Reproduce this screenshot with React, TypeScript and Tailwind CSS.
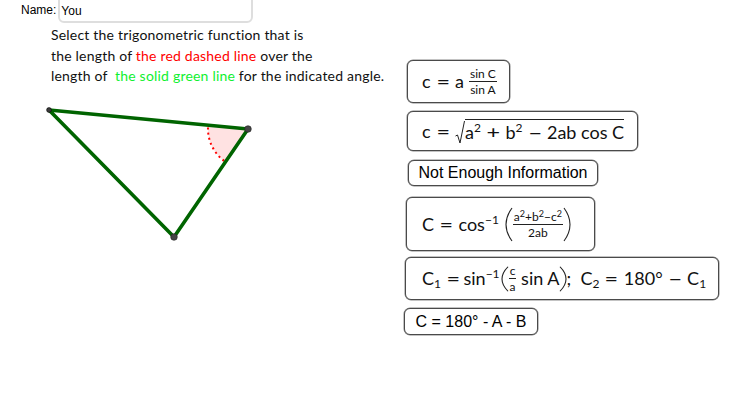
const mathFont = "font-['Lato',sans-serif] text-[#111]";
const btn = 'flex items-center rounded-[6px] border border-[#4a4a4a] bg-white shadow-[0_0_0_0.5px_#888]';

function Frac({ top, bottom, className = 'text-[12px]' }: { top: React.ReactNode; bottom: React.ReactNode; className?: string }) {
  return (
    <span className={`inline-flex flex-col items-center leading-[13px] ${className}`}>
      <span className="border-b border-[#222] px-[1px] pb-[1px]">{top}</span>
      <span className="px-[1px] pt-[1px]">{bottom}</span>
    </span>
  );
}

function Sup({ children, className = 'text-[12px] top-[-7px]' }: { children: React.ReactNode; className?: string }) {
  return <sup className={`align-baseline leading-none ${className}`}>{children}</sup>;
}

function Sub({ children }: { children: React.ReactNode }) {
  return <sub className="bottom-[-3px] align-baseline text-[12px] leading-none">{children}</sub>;
}

function Op({ children }: { children: React.ReactNode }) {
  return <span className="mx-[7px] inline-block scale-x-[1.3]">{children}</span>;
}

function Paren({ height, flip = false }: { height: number; flip?: boolean }) {
  return (
    <svg width="8" height={height} viewBox="0 0 8 36" preserveAspectRatio="none" className={flip ? '-scale-x-100' : ''}>
      <path d="M7 1 C2 8 1 13 1 18 C1 23 2 28 7 35" fill="none" stroke="#222" strokeWidth="1.1" />
    </svg>
  );
}

function Triangle() {
  return (
    <svg width="240" height="150" viewBox="30 95 240 150" className="ml-[30px] mt-[9px]">
      <path d="M248 128 L208 126 A40 40 0 0 0 224.3 160 Z" fill="#ffe2e2" />
      <path d="M208 126.5 A40 40 0 0 0 224.3 160" fill="none" stroke="#ff0000" strokeWidth="2" strokeDasharray="2 3.2" />
      <path d="M49 109 L248 128 L174 236 Z" fill="none" stroke="#006400" strokeWidth="3.6" strokeLinejoin="round" />
      <circle cx="49" cy="109" r="2.4" fill="#3c3c3c" stroke="#000" strokeWidth="0.6" />
      <circle cx="248" cy="128" r="3.3" fill="#444" stroke="#222" strokeWidth="0.6" />
      <circle cx="174" cy="236" r="3.3" fill="#444" stroke="#222" strokeWidth="0.6" />
    </svg>
  );
}

export default function App() {
  return (
    <div className="flex h-[408px] w-[736px] overflow-hidden bg-white">
      <div className="w-[404px] shrink-0">
        <div className="flex h-[24px] items-start pl-[21px] font-['Liberation_Sans',sans-serif] text-[12px] leading-[20px] text-black">
          <span className="mr-[2px]">Name:</span>
          <div className="mt-[-6px] h-[29px] w-[195px] rounded-[6px] border-2 border-[#dedede] pl-[1px] pt-[5px]">You</div>
        </div>
        <div className={`ml-[51px] mt-[1px] whitespace-pre text-[14px] leading-[20.5px] tracking-[0.2px] ${mathFont}`}>
          <p>Select the trigonometric function that is</p>
          <p>
            the length of <span className="text-[#ff0000]">the red dashed line</span> over the
          </p>
          <p>
            length of  <span className="text-[#10f030]">the solid green line</span> for the indicated angle.
          </p>
        </div>
        <Triangle />
      </div>

      <div className={`flex flex-col items-start whitespace-pre pt-[60px] text-[18px] ${mathFont}`}>
        <div className={`${btn} ml-[3px] h-[43px] w-[103px] pl-[14px]`}>
          <span>c<Op>=</Op>a</span>
          <Frac className="ml-[5px] text-[12px]" top="sin C" bottom="sin A" />
        </div>
        <div className={`${btn} ml-[3px] mt-[8px] h-[40px] w-[231px] pl-[14px]`}>
          <span>c<Op>=</Op></span>
          <svg width="10" height="25" viewBox="0 0 10 25" className="mt-[2px]">
            <path d="M0.5 16 L2.5 15 L5 23 L9.5 1" fill="none" stroke="#222" strokeWidth="1" />
          </svg>
          <span className="mt-[1px] border-t border-[#222] leading-[24px]">
            a<Sup>2</Sup><Op>+</Op>b<Sup>2</Sup><Op>−</Op>2ab cos C
          </span>
        </div>
        <div className={`${btn} ml-[4px] mt-[9px] h-[26px] w-[190px] justify-center font-['Liberation_Sans',sans-serif] text-[16px] text-black`}>
          Not Enough Information
        </div>
        <div className={`${btn} ml-[2px] mt-[11px] h-[54px] w-[189px] pl-[15px]`}>
          <span>C<Op>=</Op>cos<Sup>−1</Sup></span>
          <span className="ml-[6px]"><Paren height={35} /></span>
          <Frac
            className="text-[12px]"
            top={<>a<Sup className="top-[-4px] text-[9px]">2</Sup>+b<Sup className="top-[-4px] text-[9px]">2</Sup>−c<Sup className="top-[-4px] text-[9px]">2</Sup></>}
            bottom="2ab"
          />
          <Paren height={35} flip />
        </div>
        <div className={`${btn} ml-[1px] mt-[6px] h-[43px] w-[314px] pl-[16px]`}>
          <span>C<Sub>1</Sub><Op>=</Op><span className="-ml-[2px]">sin</span><Sup>−1</Sup></span>
          <span className="ml-[1px]"><Paren height={26} /></span>
          <Frac className="text-[12px]" top="c" bottom="a" />
          <span> sin A</span>
          <Paren height={26} flip />
          <span className="-ml-[1px]">;  C<Sub>2</Sub><Op>=</Op>180°<Op>−</Op>C<Sub>1</Sub></span>
        </div>
        <div className={`${btn} mt-[8px] h-[27px] w-[134px] justify-center font-['Liberation_Sans',sans-serif] text-[16px] text-black`}>
          C = 180° - A - B
        </div>
      </div>
    </div>
  );
}
